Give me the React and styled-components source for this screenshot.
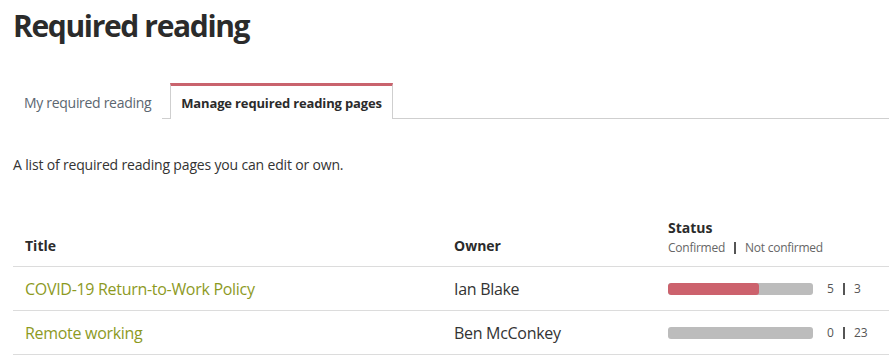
import React from "react";
import styled, { createGlobalStyle } from "styled-components";

const Global = createGlobalStyle`
  html, body { margin: 0; padding: 0; background: #fff; }
  body { font-family: "Open Sans", "Noto Sans", sans-serif; color: #333; }
`;

const Page = styled.div`
  padding: 6px 0 0 13px;
`;

const Heading = styled.h1`
  margin: 0;
  font-size: 30px;
  line-height: 39px;
  font-weight: 700;
  letter-spacing: -1.35px;
  color: #2b2b2b;
`;

const TabBar = styled.div`
  display: flex;
  gap: 8px;
  margin-top: 38px;
  border-bottom: 1px solid #cfcfcf;
`;

const Tab = styled.div`
  box-sizing: border-box;
  height: 36px;
  margin-bottom: -1px;
  padding: 0 10px;
  display: flex;
  align-items: center;
  font-size: ${(p) => (p.$active ? "13px" : "14px")};
  letter-spacing: ${(p) => (p.$active ? "-0.15px" : "-0.3px")};
  color: ${(p) => (p.$active ? "#2b2b2b" : "#5b6670")};
  font-weight: ${(p) => (p.$active ? 700 : 400)};
  background: #fff;
  border: 1px solid ${(p) => (p.$active ? "#cfcfcf" : "transparent")};
  border-top: 3px solid ${(p) => (p.$active ? "#c9636d" : "transparent")};
  border-bottom: none;
`;

const Description = styled.p`
  margin: 36px 0 0;
  font-size: 14px;
  line-height: 20px;
  letter-spacing: -0.17px;
  color: #333;
`;

const Table = styled.div`
  margin-top: 43px;
`;

const Row = styled.div`
  display: grid;
  grid-template-columns: 429px 214px 1fr;
  border-bottom: 1px solid #dcdcdc;
  align-items: ${(p) => (p.$header ? "end" : "center")};
  min-height: ${(p) => (p.$header ? "auto" : "43px")};
  padding-bottom: ${(p) => (p.$header ? "10px" : "0")};
`;

const HeadCell = styled.div`
  padding: 0 12px;
  font-size: 14px;
  line-height: 20px;
  font-weight: 700;
  color: #2b2b2b;
`;

const SubHead = styled.div`
  display: flex;
  align-items: center;
  gap: 9px;
  margin-top: 2px;
  font-size: 12px;
  line-height: 16px;
  letter-spacing: -0.25px;
  font-weight: 400;
  color: #666;
`;

const Sep = styled.span`
  display: inline-block;
  width: 2px;
  height: 12px;
  background: #555;
`;

const Cell = styled.div`
  padding: 0 12px;
  font-size: 16px;
  line-height: 22px;
  letter-spacing: -0.3px;
  color: #333;
`;

const TitleLink = styled.a`
  color: #8d9a1f;
  text-decoration: none;
`;

const StatusCell = styled.div`
  padding: 0 12px;
  display: flex;
  align-items: center;
  gap: 14px;
`;

const Bar = styled.div`
  width: 145px;
  height: 12px;
  border-radius: 3px;
  background: #bcbcbc;
  overflow: hidden;
`;

const Fill = styled.div`
  height: 100%;
  background: #cc626d;
  border-radius: 3px;
`;

const Counts = styled.div`
  display: flex;
  align-items: center;
  gap: 9px;
  font-size: 12px;
  color: #555;
`;

const rows = [
  { title: "COVID-19 Return-to-Work Policy", owner: "Ian Blake", confirmed: 5, notConfirmed: 3 },
  { title: "Remote working", owner: "Ben McConkey", confirmed: 0, notConfirmed: 23 },
];

export default function App() {
  return (
    <Page>
      <Global />
      <Heading>Required reading</Heading>
      <TabBar>
        <Tab>My required reading</Tab>
        <Tab $active>Manage required reading pages</Tab>
      </TabBar>
      <Description>A list of required reading pages you can edit or own.</Description>
      <Table>
        <Row $header>
          <HeadCell>Title</HeadCell>
          <HeadCell>Owner</HeadCell>
          <HeadCell>
            Status
            <SubHead>
              <span>Confirmed</span>
              <Sep />
              <span>Not confirmed</span>
            </SubHead>
          </HeadCell>
        </Row>
        {rows.map((r) => {
          const total = r.confirmed + r.notConfirmed;
          const pct = total ? (r.confirmed / total) * 100 : 0;
          return (
            <Row key={r.title}>
              <Cell>
                <TitleLink href="#">{r.title}</TitleLink>
              </Cell>
              <Cell>{r.owner}</Cell>
              <StatusCell>
                <Bar>
                  <Fill style={{ width: `${pct}%` }} />
                </Bar>
                <Counts>
                  <span>{r.confirmed}</span>
                  <Sep />
                  <span>{r.notConfirmed}</span>
                </Counts>
              </StatusCell>
            </Row>
          );
        })}
      </Table>
    </Page>
  );
}
